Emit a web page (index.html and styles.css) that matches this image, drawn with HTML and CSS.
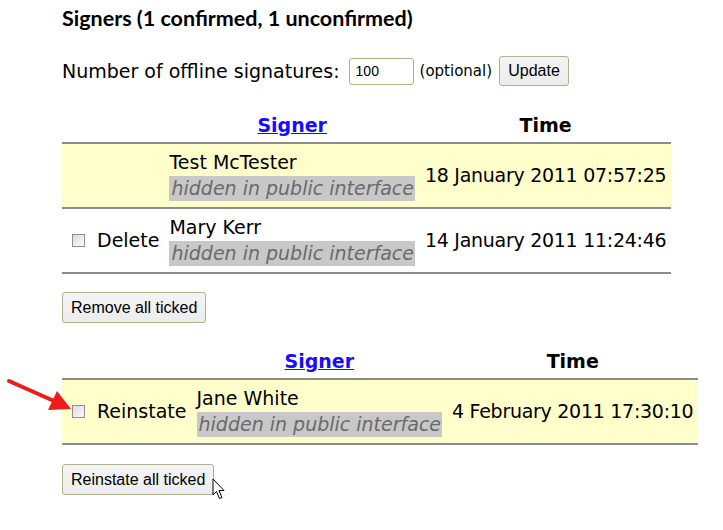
FILE: index.html
```html
<!DOCTYPE html>
<html>
<head>
<meta charset="utf-8">
<link rel="stylesheet" href="styles.css">
</head>
<body>
<div class="page">
  <h2 class="title">Signers (1 confirmed, 1 unconfirmed)</h2>
  <form class="offline">
    <label>Number of offline signatures:</label>
    <input class="num" type="text" value="100">
    <span class="opt">(optional)</span>
    <button type="button" class="btn btn-update">Update</button>
  </form>

  <table class="signers">
    <thead>
      <tr><th class="c-act"></th><th class="c-name"><a href="#">Signer</a></th><th class="c-time">Time</th></tr>
    </thead>
    <tbody>
      <tr class="hl">
        <td class="c-act"></td>
        <td class="c-name"><div class="who">Test McTester</div><div class="hid"><span>hidden in public interface</span></div></td>
        <td class="c-time">18 January 2011 07:57:25</td>
      </tr>
      <tr>
        <td class="c-act"><label class="act"><span class="cb"></span>Delete</label></td>
        <td class="c-name"><div class="who">Mary Kerr</div><div class="hid"><span>hidden in public interface</span></div></td>
        <td class="c-time">14 January 2011 11:24:46</td>
      </tr>
    </tbody>
  </table>
  <div class="actions"><button type="button" class="btn btn-wide">Remove all ticked</button></div>

  <table class="signers second">
    <thead>
      <tr><th class="c-act"></th><th class="c-name"><a href="#">Signer</a></th><th class="c-time">Time</th></tr>
    </thead>
    <tbody>
      <tr class="hl">
        <td class="c-act"><label class="act"><span class="cb"></span>Reinstate</label></td>
        <td class="c-name"><div class="who">Jane White</div><div class="hid"><span>hidden in public interface</span></div></td>
        <td class="c-time">4 February 2011 17:30:10</td>
      </tr>
    </tbody>
  </table>
  <div class="actions last"><button type="button" class="btn btn-wide">Reinstate all ticked</button></div>
</div>

<svg class="arrow" width="80" height="40" viewBox="0 0 80 40">
  <line x1="9" y1="3" x2="54" y2="23" stroke="#ee1b1b" stroke-width="4" stroke-linecap="round"/>
  <polygon points="71,31 48,32 57,13" fill="#ee1b1b"/>
</svg>
<svg class="cursor" width="14" height="22" viewBox="0 0 14 22">
  <path d="M1 1 L1 17 L4.5 13.5 L7.5 20.5 L10 19.5 L7 12.5 L12 12.5 Z" fill="#fff" stroke="#000" stroke-width="1" stroke-linejoin="round"/>
</svg>
</body>
</html>
```

FILE: styles.css
```css
html, body {
  margin: 0;
  padding: 0;
  background: #fff;
}
body {
  width: 723px;
  height: 530px;
  position: relative;
  overflow: hidden;
  font-family: "DejaVu Sans", Verdana, sans-serif;
  font-size: 19px;
  color: #000;
}
.page {
  padding: 4px 0 0 62px;
}
.title {
  font-family: Lato, "Open Sans", sans-serif;
  font-weight: bold;
  font-size: 21.5px;
  margin: 0;
  line-height: 28px;
}
.offline {
  margin: 24px 0 0 0;
  display: flex;
  align-items: center;
  height: 30px;
}
.num {
  box-sizing: border-box;
  width: 65px;
  height: 27px;
  margin: 0 0 0 9px;
  border: 1px solid #b3b08c;
  border-radius: 3px;
  padding: 0 6px;
  font-family: "Liberation Sans", Arial, sans-serif;
  font-size: 14px;
  color: #000;
}
.opt {
  font-size: 15px;
  margin-left: 6px;
}
.btn {
  box-sizing: border-box;
  border: 1px solid #b3b08c;
  border-radius: 3px;
  background: linear-gradient(#f4f4f4, #ececec);
  font-family: "Liberation Sans", Arial, sans-serif;
  font-size: 16px;
  color: #000;
  padding: 0 8px;
  height: 31px;
}
.btn-update {
  margin-left: 7px;
  height: 30px;
  width: 70px;
}
.signers {
  border-collapse: collapse;
  margin-top: 27px;
}
.signers th {
  font-weight: bold;
  padding: 0 5px 5px;
  line-height: 24px;
  border-bottom: 2px solid #8c8c8c;
  text-align: center;
}
.signers th a {
  color: #1a0dff;
  text-decoration: underline;
}
.signers td {
  padding: 5px 5px 6px;
  line-height: 26px;
  border-bottom: 2px solid #8c8c8c;
  vertical-align: middle;
  white-space: nowrap;
}
.signers td.c-time {
  letter-spacing: -0.28px;
}
.signers tr.hl td {
  background: #ffffcc;
}
.hid span {
  background: #c8c8c8;
  color: #6a6a6a;
  font-style: italic;
  padding: 1px 1px 2px 2px;
}
.act {
  display: flex;
  align-items: center;
}
.cb {
  box-sizing: border-box;
  width: 13px;
  height: 13px;
  margin: 0 12px 0 5px;
  border: 1px solid #8f8f8f;
  background: linear-gradient(135deg, #dcdcdc, #fbfbfb);
  display: inline-block;
}
.actions {
  margin-top: 18px;
}
.second {
  margin-top: 26px;
}
.actions.last {
  margin-top: 19px;
}
.arrow {
  position: absolute;
  left: 0;
  top: 378px;
}
.cursor {
  position: absolute;
  left: 212px;
  top: 478px;
}
```
